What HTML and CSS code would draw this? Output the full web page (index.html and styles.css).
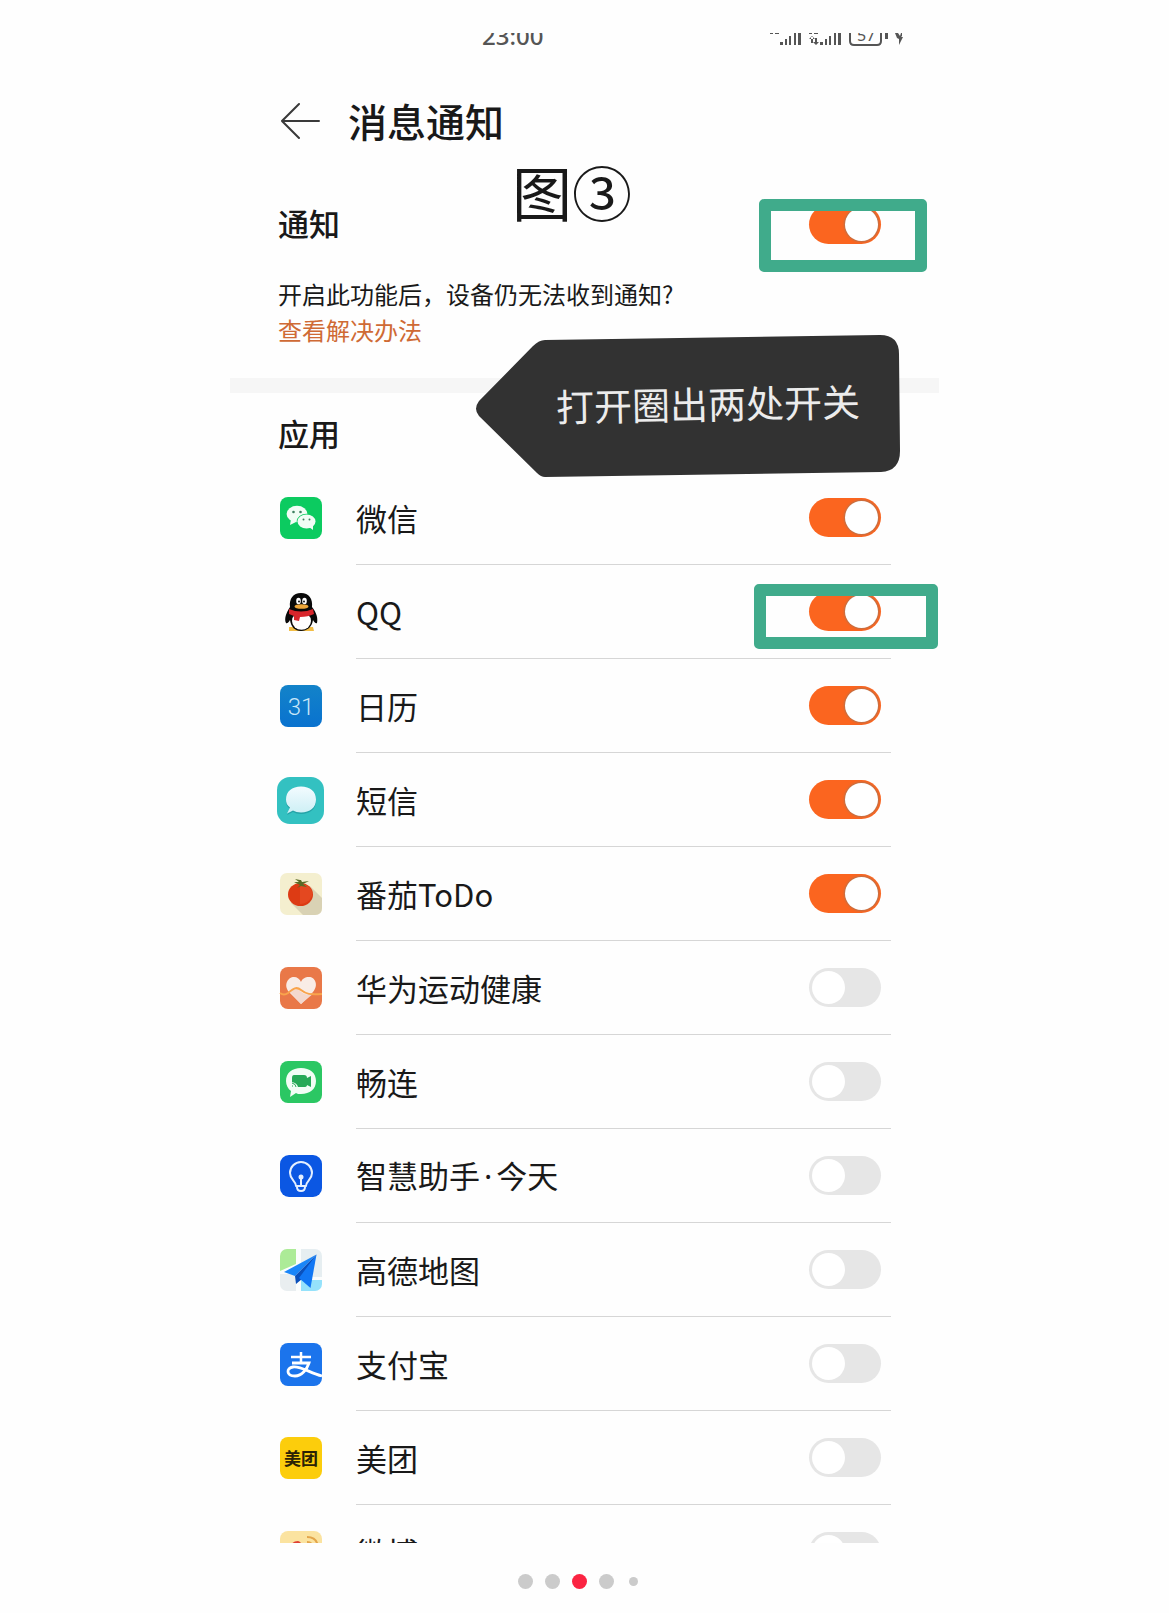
FILE: index.html
```html
<!DOCTYPE html>
<html lang="zh-CN">
<head>
<meta charset="utf-8">
<meta name="viewport" content="width=device-width, initial-scale=1">
<title>消息通知</title>
<link rel="stylesheet" href="styles.css">
</head>
<body>
<main class="viewer">
  <section class="slide">
    <div class="status">
      <span class="status-time">23:00</span>
      <svg class="status-icons" width="140" height="13" viewBox="0 0 140 13" aria-hidden="true">
        <g fill="#555">
          <path d="M5 0h3v1H5zM10 0h4v1h-4zM44 0h3v1h-3zM49 0h4v1h-4z"/>
          <path d="M15 9h3v3h-3zM20 6h2v6h-2zM24 3h2v9h-2zM29 0h2v12h-2zM33 0h3v12h-3z"/>
          <path d="M46 4h2v6h-2zM44 6h6l-3-3zM50 5h2v5h-2zM48 9h6l-3 3z"/>
          <path d="M55 9h3v3h-3zM60 6h2v6h-2zM64 3h2v9h-2zM69 0h2v12h-2zM73 0h3v12h-3z"/>
          <path d="M120 0h3v6h-3zM130 0h3l2 3 1-3h1v3l-1 1h2l-4 8v-6l-2-1z"/>
        </g>
        <path d="M85 0v8q0 4 4 4h23q4 0 4-4V0" fill="none" stroke="#555" stroke-width="2"/>
        <text class="status-level" x="92" y="8">57</text>
      </svg>
    </div>

    <header class="topbar">
      <button class="back" type="button" aria-label="返回">
        <svg width="40" height="38" viewBox="0 0 40 38" fill="none" stroke="#3a3a3a" stroke-width="2" stroke-linecap="round"><path d="M1 19H38M18 2L1 19L18 36"/></svg>
      </button>
      <h1 class="title">消息通知</h1>
    </header>

    <div class="master">
      <label class="heading" for="sw-all">通知</label>
      <input class="switch" id="sw-all" type="checkbox" checked>
    </div>
    <div class="hint">
      <p>开启此功能后，设备仍无法收到通知?</p>
      <a href="#help">查看解决办法</a>
    </div>
    <div class="band"></div>
    <h2 class="heading apps-title">应用</h2>

    <ul class="apps">
      <li class="app">
        <svg class="icon" viewBox="0 0 42 42"><rect width="42" height="42" rx="8" fill="#0ccb60"/><g fill="#f1fdf5"><ellipse cx="17" cy="17" rx="10.400" ry="8.300"/><path d="M11 22l-1 6 6-3z"/></g><ellipse cx="26.500" cy="24.500" rx="9.800" ry="7.800" fill="#0ccb60"/><g fill="#f1fdf5"><ellipse cx="26.500" cy="24.500" rx="9" ry="7"/><path d="M29 30l4 3v-5z"/></g><g fill="#3f8060"><circle cx="13.500" cy="15" r="1.300"/><circle cx="20.500" cy="15" r="1.300"/><circle cx="23.500" cy="22.500" r="1"/><circle cx="29.500" cy="22.500" r="1"/></g></svg>
        <div class="app-body"><label for="sw-1">微信</label><input class="switch" id="sw-1" type="checkbox" checked></div>
      </li>
      <li class="app">
        <svg class="icon" viewBox="0 0 42 42"><path d="M9 36h24l1 4H9z" fill="#f2bd45"/><path d="M21 2C13 2 9 8 10 16c-4 6-6 12-4 16 1 1 3-1 4-3 1 7 5 11 11 11s11-4 12-11c1 2 3 4 4 3 1-4 0-10-5-16C33 8 29 2 21 2z" fill="#090909"/><ellipse cx="21.500" cy="30" rx="9.500" ry="8.800" fill="#fff"/><ellipse cx="18.500" cy="10" rx="2.300" ry="3.200" fill="#fff"/><ellipse cx="24.500" cy="10" rx="2.300" ry="3.200" fill="#fff"/><circle cx="19" cy="10.500" r="1" fill="#111"/><circle cx="24" cy="10.500" r="1" fill="#111"/><ellipse cx="21.500" cy="15.500" rx="7" ry="2.300" fill="#eda63a"/><path d="M9 18q12 5 24 0l1 5q-6 3-14 3l-1 4-5-1v-4l-5-2z" fill="#d8262c"/></svg>
        <div class="app-body"><label for="sw-2">QQ</label><input class="switch" id="sw-2" type="checkbox" checked></div>
      </li>
      <li class="app">
        <svg class="icon" viewBox="0 0 42 42"><defs><linearGradient id="cal" x2="0" y2="1"><stop stop-color="#1383c9"/><stop offset="1" stop-color="#0972cf"/></linearGradient></defs><rect width="42" height="42" rx="8" fill="url(#cal)"/><text class="cal-day" x="21" y="30" text-anchor="middle">31</text></svg>
        <div class="app-body"><label for="sw-3">日历</label><input class="switch" id="sw-3" type="checkbox" checked></div>
      </li>
      <li class="app">
        <svg class="icon" viewBox="0 0 42 42"><defs><linearGradient id="sms" x2="0" y2="1"><stop stop-color="#f3fbff"/><stop offset="1" stop-color="#cdeff5"/></linearGradient></defs><rect x="-3" y="-2" width="47" height="47" rx="13" fill="#33c1c1"/><path d="M21 9c9 0 15 5 15 13s-6 13-15 13c-3 0-6-1-8-2l-6 3 3-6c-3-2-4-5-4-8C6 14 12 9 21 9z" fill="#25a3a8"/><path d="M21 7.500c9 0 15 5 15 13s-6 13-15 13c-3 0-6-1-8-2l-6 3 3-6c-3-2-4-5-4-8 0-8 6-13 15-13z" fill="url(#sms)"/></svg>
        <div class="app-body"><label for="sw-4">短信</label><input class="switch" id="sw-4" type="checkbox" checked></div>
      </li>
      <li class="app">
        <svg class="icon" viewBox="0 0 42 42"><rect width="42" height="42" rx="7" fill="#f4efcf"/><path d="M31 14l11 11v10q0 7-7 7H23L11 30z" fill="#d9d2b4"/><ellipse cx="20.500" cy="21.500" rx="12.500" ry="11.500" fill="#dd3b14"/><path d="M20 10v21q8 0 12-8 1-6-4-10z" fill="#e9532a" opacity=".55"/><path d="M20 12l-6-3 5 0-4-3 5 1 1 0 1 2 7-1-6 3 4 3-6-1-4 2z" fill="#5a6b26"/></svg>
        <div class="app-body"><label for="sw-5">番茄ToDo</label><input class="switch" id="sw-5" type="checkbox" checked></div>
      </li>
      <li class="app">
        <svg class="icon" viewBox="0 0 42 42"><rect width="42" height="42" rx="8" fill="#e97848"/><path d="M21 37L9 25C3 18 8 10 14 10c3 0 6 2 7 5 1-3 4-5 8-5 6 0 10 8 4 15z" fill="#f9ece6"/><path d="M10 25q6-5 10-1 6 6 14 2L21 37z" fill="#f3d8ce"/><path d="M0 26q4 3 8 0c5-4 8-7 13-3s9 5 21 4" fill="none" stroke="#f9a44c" stroke-width="2"/></svg>
        <div class="app-body"><label for="sw-6">华为运动健康</label><input class="switch" id="sw-6" type="checkbox"></div>
      </li>
      <li class="app">
        <svg class="icon" viewBox="0 0 42 42"><rect width="42" height="42" rx="8" fill="#2bc763"/><path d="M21 7c9 0 15 5 15 13s-6 13-15 13c-2 0-4 0-5-1l-6 4 1-6c-3-2-5-6-5-10C6 12 12 7 21 7z" fill="#f2fdf5"/><path d="M14 14h10q3 0 3 3l4-2v11l-4-2q0 2-3 2h-6q-1-4-6-5v-4q0-3 2-3z" fill="#25a956"/><path d="M12 22q4 1 4 4M12 25h1" fill="none" stroke="#25a956" stroke-width="1"/></svg>
        <div class="app-body"><label for="sw-7">畅连</label><input class="switch" id="sw-7" type="checkbox"></div>
      </li>
      <li class="app">
        <svg class="icon" viewBox="0 0 42 42"><rect width="42" height="42" rx="9" fill="#0b57e3"/><g fill="none" stroke="#e4efff" stroke-width="2"><path d="M16 31c0-5-6-6-6-13a11 11 0 0 1 22 0c0 7-6 8-6 13z" stroke-linejoin="round"/><path d="M17 32q0 4 4 4t4-4M21 23v8"/></g><circle cx="21" cy="22" r="2.500" fill="#e4efff"/></svg>
        <div class="app-body"><label for="sw-8">智慧助手<span class="middot">·</span>今天</label><input class="switch" id="sw-8" type="checkbox"></div>
      </li>
      <li class="app">
        <svg class="icon" viewBox="0 0 42 42"><defs><clipPath id="mapclip"><rect width="42" height="42" rx="7"/></clipPath></defs><g clip-path="url(#mapclip)"><rect width="42" height="42" fill="#fbfdfd"/><path d="M0 0h16v15L0 22z" fill="#aceb97"/><path d="M21 0h21v28H21z" fill="#e6eef1"/><path d="M0 25h16v17H0z" fill="#e9eef0"/><path d="M21 31h21v11H21z" fill="#95e2fb"/></g><path d="M36.500 5.500L4 23l11 4z" fill="#1a86f8"/><path d="M36.500 5.500L15 27l1 8 6-5z" fill="#0a50bb"/><path d="M36.500 5.500L19 29l11.500 10z" fill="#1177f4"/></svg>
        <div class="app-body"><label for="sw-9">高德地图</label><input class="switch" id="sw-9" type="checkbox"></div>
      </li>
      <li class="app">
        <svg class="icon" viewBox="0 0 42 42"><rect width="42" height="43" rx="8" fill="#1b74ec"/><g fill="none" stroke="#fff"><path d="M11 14h20M21 9v11" stroke-width="2.500"/><path d="M12 20h17c-2 6-7 13-14 13-9 0-9-8-2-9 8-1 17 6 29 9" stroke-width="2.800"/></g></svg>
        <div class="app-body"><label for="sw-10">支付宝</label><input class="switch" id="sw-10" type="checkbox"></div>
      </li>
      <li class="app">
        <svg class="icon" viewBox="0 0 42 42"><rect width="42" height="42" rx="8" fill="#fccd0c"/><text class="meituan" x="21" y="28" text-anchor="middle">美团</text></svg>
        <div class="app-body"><label for="sw-11">美团</label><input class="switch" id="sw-11" type="checkbox"></div>
      </li>
      <li class="app app-cut">
        <svg class="icon" viewBox="0 0 42 42"><rect width="42" height="42" rx="8" fill="#fbe3a0"/><ellipse cx="17" cy="24" rx="13" ry="10" fill="#fff3dd"/><path d="M11 14q2-4 7-4 4 1 4 6l-8 8z" fill="#df4033"/><path d="M27 6q11 0 11 12M27 11q6 0 6 7" fill="none" stroke="#e3a54a" stroke-width="2"/></svg>
        <div class="app-body"><label for="sw-12">微博</label><input class="switch" id="sw-12" type="checkbox"></div>
      </li>
    </ul>

    <p class="figure-no">图③</p>
    <div class="frame frame-master"></div>
    <div class="frame frame-qq"></div>
    <div class="callout">
      <svg class="callout-shape" width="426" height="144" viewBox="0 0 426 144" aria-hidden="true"><path d="M4 67L58 12Q64 6 70 6L405 1Q424 1 424 20L425 117Q425 137 406 138L70 143Q66 143 62 139L4 82Q-2 75 4 67z" fill="#323232"/></svg>
      <p class="callout-text">打开圈出两处开关</p>
    </div>
  </section>

  <nav class="dots" aria-label="图片">
    <button class="dot" type="button" aria-label="第1张"></button>
    <button class="dot" type="button" aria-label="第2张"></button>
    <button class="dot dot-current" type="button" aria-label="第3张" aria-current="true"></button>
    <button class="dot" type="button" aria-label="第4张"></button>
    <button class="dot dot-small" type="button" aria-label="第5张"></button>
  </nav>
</main>
</body>
</html>
```
FILE: styles.css
```css
* {
  box-sizing: border-box;
}

body {
  margin: 0;
  background: #fefefe;
  color: #191919;
  font-family: "Noto Sans CJK SC", "Noto Sans", sans-serif;
}

h1, h2, p, ul {
  margin: 0;
  padding: 0;
}

button {
  padding: 0;
  border: 0;
  background: none;
}

.viewer {
  padding: 33px 0 24px;
}

.slide {
  position: relative;
  max-width: 709px;
  margin: 0 auto;
  overflow: hidden;
}

/* status bar, cut by the top edge of the slide */
.status {
  display: flex;
  justify-content: space-between;
  align-items: flex-end;
  height: 13px;
  padding: 0 34px 0 252px;
  overflow: hidden;
}

.status-time {
  font: 500 24px/24px "Noto Sans", sans-serif;
  color: #555;
  margin-bottom: -2px;
}

.status-level {
  font: 16px "Noto Sans", sans-serif;
  fill: #555;
}

.topbar {
  display: flex;
  align-items: center;
  gap: 27px;
  height: 56px;
  margin-top: 47px;
  padding-left: 51px;
}

.back {
  display: flex;
}

.title {
  font-size: 39px;
  line-height: 52px;
  font-weight: 500;
  padding-bottom: 2px;
}

.master {
  display: flex;
  align-items: center;
  justify-content: space-between;
  height: 60px;
  margin-top: 45px;
  padding: 0 58px 0 48px;
}

.heading {
  font-size: 31px;
  line-height: 60px;
  font-weight: 500;
}

.master .heading {
  padding-bottom: 2px;
}

.hint {
  margin-top: 22px;
  padding-left: 48px;
  font-size: 24px;
  line-height: 36px;
}

.hint a {
  display: block;
  color: #cf6a35;
  text-decoration: none;
}

.band {
  height: 15px;
  margin-top: 30px;
  background: #f6f6f6;
}

.apps-title {
  padding: 10px 48px 8px;
}

.apps {
  list-style: none;
}

.app {
  display: flex;
  align-items: center;
  gap: 34px;
  height: 94px;
  padding: 0 48px 0 50px;
}

.icon {
  flex: none;
  width: 42px;
  height: 42px;
  overflow: visible;
}

.app-body {
  flex: 1;
  display: flex;
  align-items: center;
  justify-content: space-between;
  height: 94px;
  padding-right: 10px;
  border-bottom: 1px solid #d6d6d6;
  font-size: 31px;
  line-height: 48px;
}

.middot {
  padding: 0 4px;
  font-family: "Noto Sans", sans-serif;
}

/* last row is cut by the bottom edge of the slide */
.app-cut {
  height: 38px;
  align-items: flex-start;
  overflow: hidden;
}

.app-cut .icon {
  margin-top: 26px;
}

.cal-day {
  font: 300 24px Roboto, sans-serif;
  fill: #c8e6f8;
}

.meituan {
  font-size: 17px;
  font-weight: 700;
  fill: #2b2205;
}

.switch {
  appearance: none;
  flex: none;
  display: flex;
  align-items: center;
  width: 72px;
  height: 39px;
  margin: 0;
  padding: 0 3px;
  border-radius: 20px;
  background: #e6e6e6;
}

.switch::before {
  content: "";
  width: 33px;
  height: 33px;
  border-radius: 50%;
  background: #fff;
}

.switch:checked {
  justify-content: flex-end;
  background: #fb651f;
}

.switch:checked::before {
  box-shadow: 0 0 2px 1px #b8724c;
}

/* annotations drawn over the settings page */
.figure-no {
  position: absolute;
  left: 282px;
  top: 118px;
  font-size: 60px;
  line-height: 80px;
}

.frame {
  position: absolute;
  border: 12px solid #40ab8b;
  border-radius: 5px;
}

.frame-master {
  left: 529px;
  top: 166px;
  width: 168px;
  height: 73px;
}

.frame-qq {
  left: 524px;
  top: 551px;
  width: 184px;
  height: 65px;
}

.callout {
  position: absolute;
  left: 245px;
  top: 301px;
}

.callout-shape {
  display: block;
}

.callout-text {
  position: absolute;
  left: 81px;
  top: 41px;
  font-size: 38px;
  line-height: 56px;
  color: #ececec;
  white-space: nowrap;
  transform: rotate(-1deg);
}

.dots {
  display: flex;
  justify-content: center;
  align-items: center;
  gap: 12px;
  margin-top: 31px;
  padding-right: 10px;
}

.dot {
  width: 15px;
  height: 15px;
  border-radius: 50%;
  background: #cbcbcb;
}

.dot-current {
  background: #fb2442;
}

.dot-small {
  width: 9px;
  height: 9px;
  margin: 3px;
}
```
